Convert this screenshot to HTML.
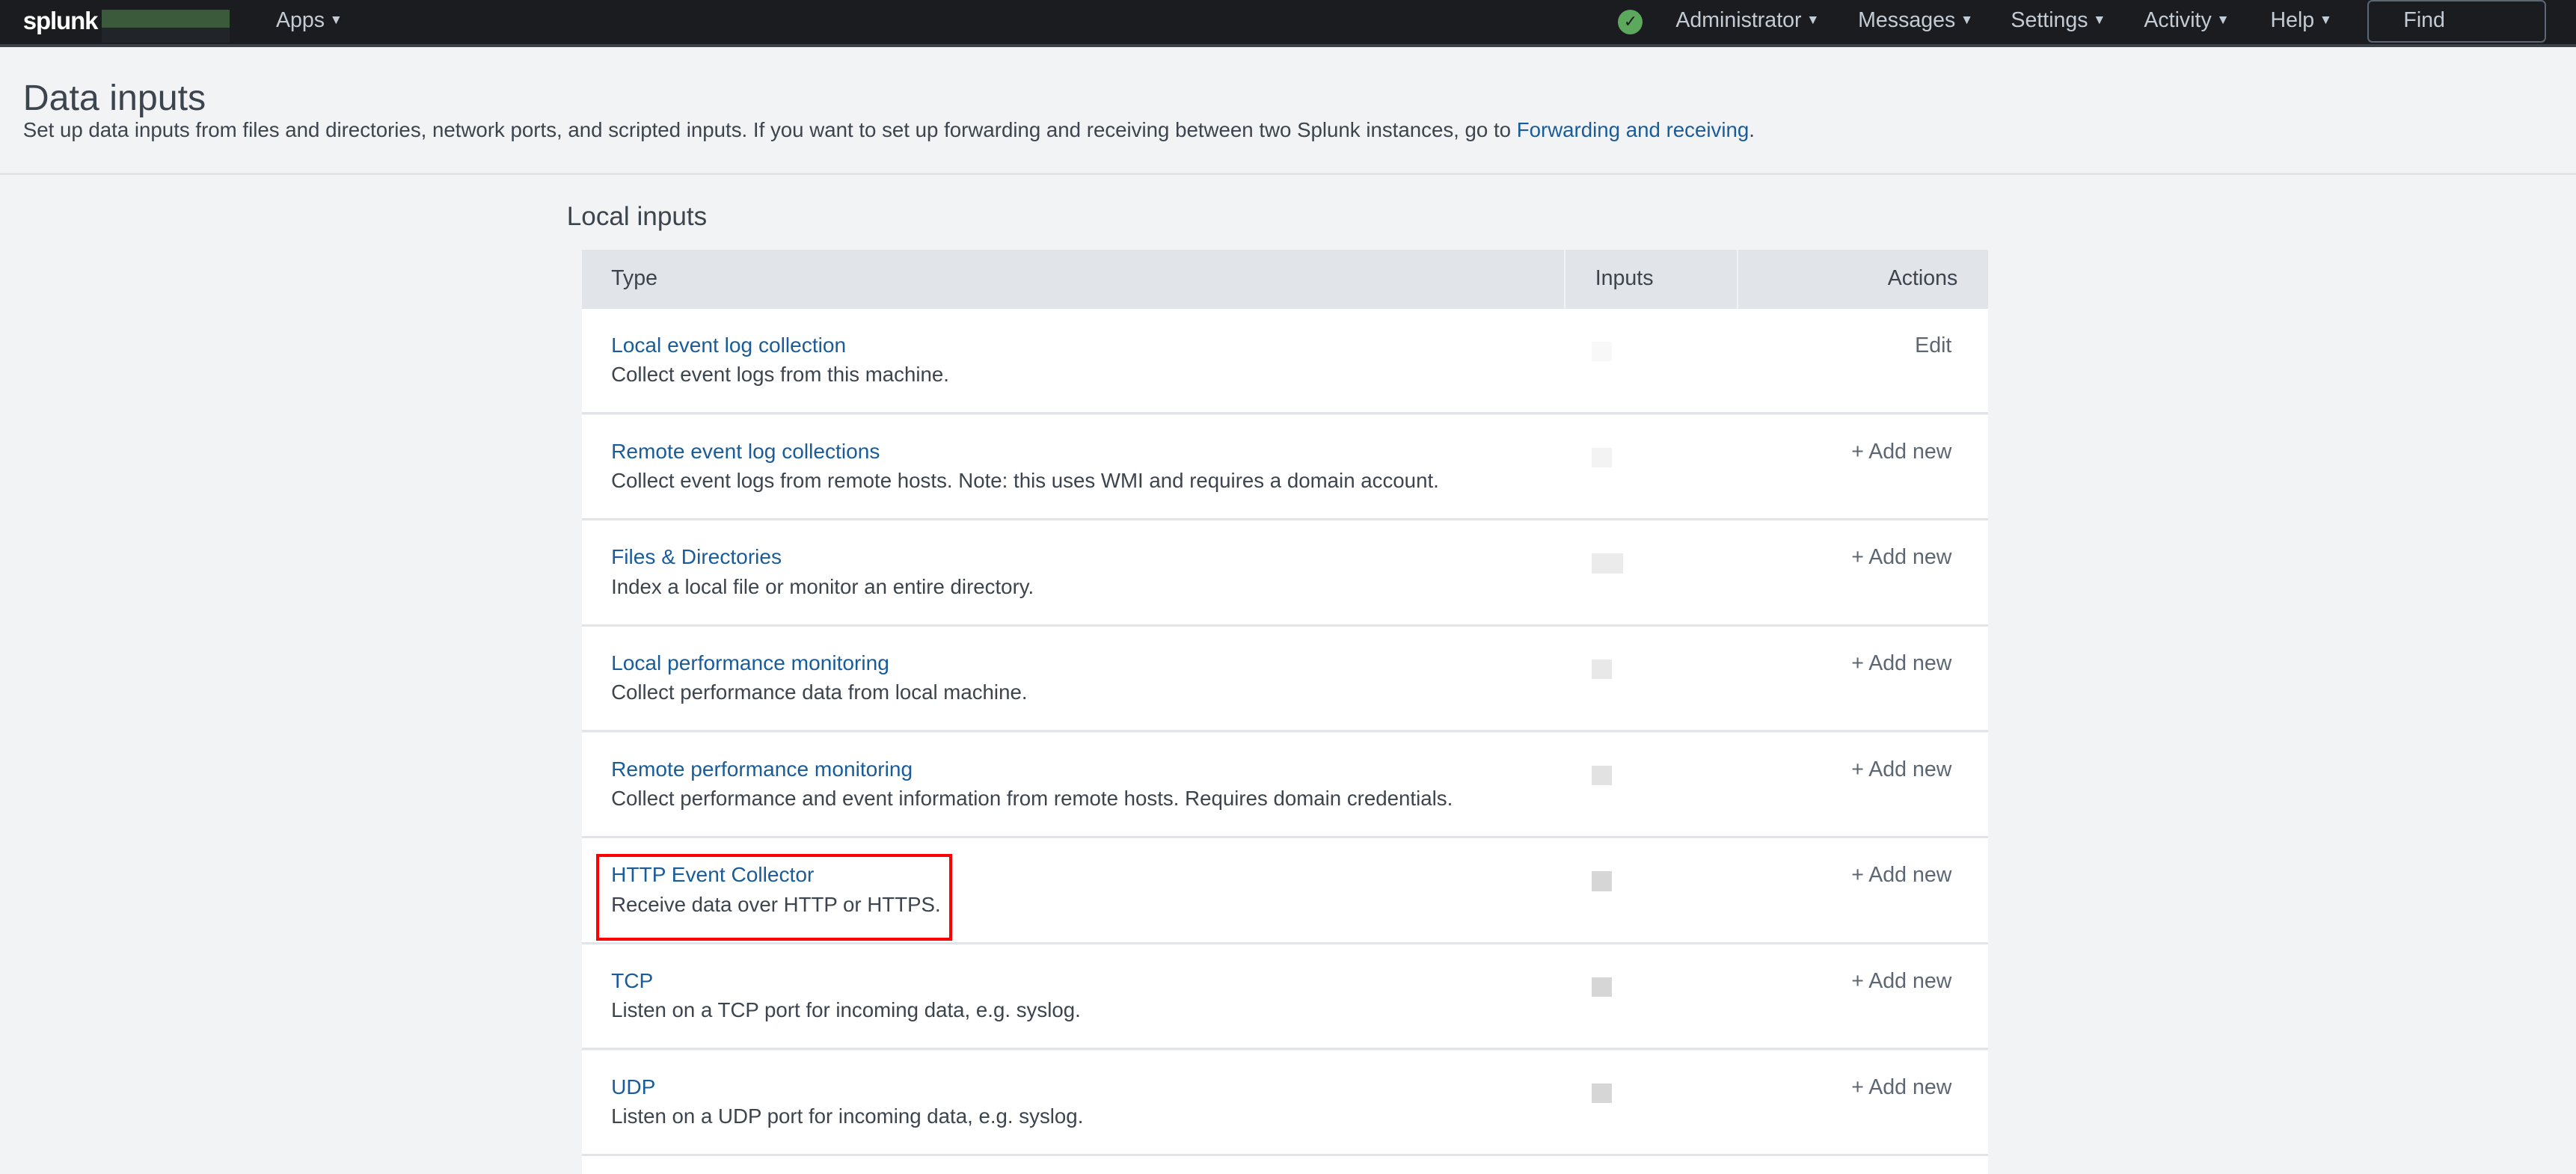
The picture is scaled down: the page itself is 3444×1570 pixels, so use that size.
<!DOCTYPE html>
<html><head><meta charset="utf-8"><style>
html,body{margin:0;padding:0;overflow:hidden;width:3444px;height:1570px}
#w{width:1568px;height:715px;zoom:2.19643;background:#f2f3f5;font-family:"Liberation Sans",sans-serif;color:#3c444d;position:relative;overflow:hidden}
.a{position:absolute;white-space:nowrap}
.nav{position:absolute;left:0;top:0;width:1568px;height:27px;background:#1a1c20;border-bottom:2px solid #3c4148}
.nv{color:#c3cbd4;font-size:13px;top:5px}
.tri{font-size:8px;vertical-align:2px;margin-left:3px}
.row{position:absolute;left:354px;width:856px;height:63px;background:#fff;border-bottom:1.5px solid #e1e4e9}
.lk{position:absolute;left:18px;top:15px;color:#1a5c99;font-size:12.8px;white-space:nowrap}
.ds{position:absolute;left:18px;top:33px;color:#3c444d;font-size:12.6px;white-space:nowrap}
.sq{position:absolute;left:615px;top:20px;width:12px;height:12px;background:#f0f0f0}
.ac{position:absolute;right:22px;top:15px;color:#5c6773;font-size:13px;white-space:nowrap}
</style></head><body><div id="w">
<div class="nav"></div>
<div class="a" style="left:14px;top:4px;color:#fff;font-size:15px;font-weight:bold;letter-spacing:-0.5px">splunk</div>
<div class="a" style="left:62px;top:6px;width:78px;height:11px;background:#3b5a3c"></div>
<div class="a" style="left:62px;top:17px;width:78px;height:9px;background:#212428"></div>
<div class="a nv" style="left:168px">Apps<span class="tri">▼</span></div>
<div class="a" style="left:985px;top:6px;width:15px;height:15px;border-radius:50%;background:#5ca85c;color:#1a1c20;font-size:10px;text-align:center;line-height:15px">✓</div>
<div class="a nv" style="left:1020px">Administrator<span class="tri">▼</span></div>
<div class="a nv" style="left:1131px">Messages<span class="tri">▼</span></div>
<div class="a nv" style="left:1224px">Settings<span class="tri">▼</span></div>
<div class="a nv" style="left:1305px">Activity<span class="tri">▼</span></div>
<div class="a nv" style="left:1382px">Help<span class="tri">▼</span></div>
<div class="a" style="left:1441px;top:0px;width:107px;height:24px;border:1px solid #5c6773;border-radius:3px"></div>
<div class="a" style="left:1463px;top:5px;color:#c3cbd4;font-size:13px">Find</div>

<div class="a" style="left:14px;top:47px;font-size:22px;color:#3c444d">Data inputs</div>
<div class="a" style="left:14px;top:72px;font-size:12.6px;color:#3c444d">Set up data inputs from files and directories, network ports, and scripted inputs. If you want to set up forwarding and receiving between two Splunk instances, go to <span style="color:#1a5c99">Forwarding and receiving</span>.</div>
<div class="a" style="left:0;top:105px;width:1568px;height:1.5px;background:#e1e4e9"></div>

<div class="a" style="left:345px;top:123px;font-size:16px;color:#3c444d">Local inputs</div>
<div class="a" style="left:354px;top:152px;width:856px;height:36px;background:#e1e4e9"></div>
<div class="a" style="left:952px;top:152px;width:1px;height:36px;background:#f2f3f5"></div>
<div class="a" style="left:1057px;top:152px;width:1px;height:36px;background:#f2f3f5"></div>
<div class="a" style="left:372px;top:162px;font-size:13px">Type</div>
<div class="a" style="left:971px;top:162px;font-size:13px">Inputs</div>
<div class="a" style="left:1149px;top:162px;font-size:13px">Actions</div>

<div class="row" style="top:188px"><div class="lk">Local event log collection</div><div class="ds">Collect event logs from this machine.</div><div class="sq" style="background:#f8f8f8"></div><div class="ac">Edit</div></div>
<div class="row" style="top:252.5px"><div class="lk">Remote event log collections</div><div class="ds">Collect event logs from remote hosts. Note: this uses WMI and requires a domain account.</div><div class="sq" style="background:#f3f3f3"></div><div class="ac">+ Add new</div></div>
<div class="row" style="top:317px"><div class="lk">Files &amp; Directories</div><div class="ds">Index a local file or monitor an entire directory.</div><div class="sq" style="background:#ebebeb;width:19px"></div><div class="ac">+ Add new</div></div>
<div class="row" style="top:381.5px"><div class="lk">Local performance monitoring</div><div class="ds">Collect performance data from local machine.</div><div class="sq" style="background:#e8e8e8"></div><div class="ac">+ Add new</div></div>
<div class="row" style="top:446px"><div class="lk">Remote performance monitoring</div><div class="ds">Collect performance and event information from remote hosts. Requires domain credentials.</div><div class="sq" style="background:#e2e2e2"></div><div class="ac">+ Add new</div></div>
<div class="row" style="top:510.5px"><div class="lk">HTTP Event Collector</div><div class="ds">Receive data over HTTP or HTTPS.</div><div class="sq" style="background:#d6d6d6"></div><div class="ac">+ Add new</div></div>
<div class="row" style="top:575px"><div class="lk">TCP</div><div class="ds">Listen on a TCP port for incoming data, e.g. syslog.</div><div class="sq" style="background:#d6d6d6"></div><div class="ac">+ Add new</div></div>
<div class="row" style="top:639.5px"><div class="lk">UDP</div><div class="ds">Listen on a UDP port for incoming data, e.g. syslog.</div><div class="sq" style="background:#d6d6d6"></div><div class="ac">+ Add new</div></div>
<div class="row" style="top:704px;height:11px;border:none"></div>

<div class="a" style="left:363px;top:520px;width:213px;height:49px;border:2px solid #ff0000"></div>
</div></body></html>
